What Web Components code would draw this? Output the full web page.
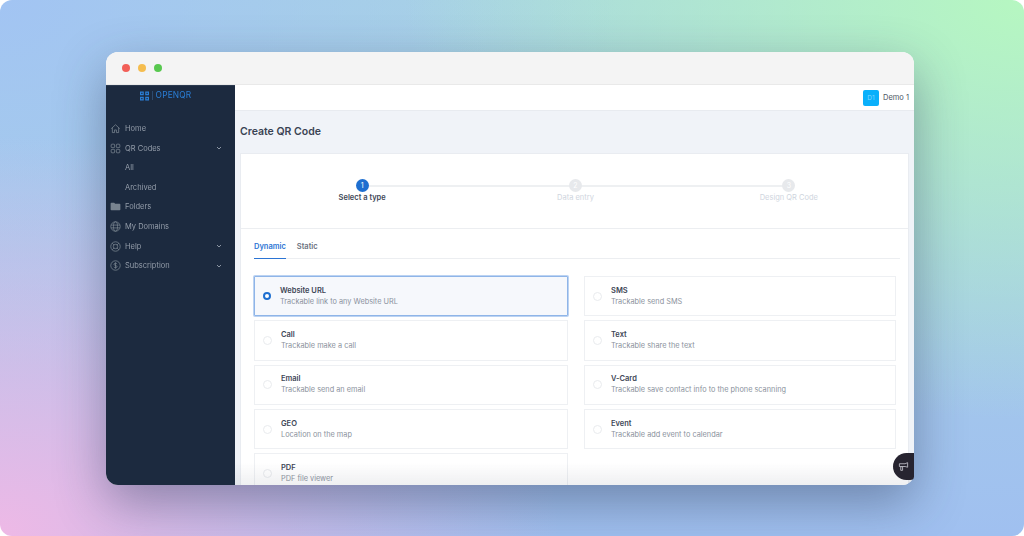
<!DOCTYPE html>
<html>
<head>
<meta charset="utf-8">
<title>OpenQR</title>
<style>
  html, body { margin: 0; height: 100%; }
  body {
    width: 1024px;
    height: 536px;
    overflow: hidden;
    background: #fff;
    font-family: Inter, "Liberation Sans", sans-serif;
  }
</style>
</head>
<body>
<desk-top>
  <app-window>
    <side-nav slot="nav"></side-nav>
    <top-bar slot="top"></top-bar>
    <create-page slot="main"></create-page>
  </app-window>
</desk-top>

<script>
const ICONS = {
  home: '<path d="M1.6 7.2 7 2.2l5.4 5M3 6v6.2h2.8V8.8h2.4v3.4H11V6" fill="none" stroke="currentColor" stroke-width="1"/>',
  grid: '<g fill="none" stroke="currentColor" stroke-width="1"><rect x="1.5" y="1.5" width="4.4" height="4.4" rx="1"/><rect x="8.1" y="1.5" width="4.4" height="4.4" rx="1"/><rect x="1.5" y="8.1" width="4.4" height="4.4" rx="1"/><rect x="8.1" y="8.1" width="4.4" height="4.4" rx="1"/></g>',
  folder: '<path d="M.8 3.2c0-.6.4-1 1-1h3.5l1.3 1.4h5.6c.6 0 1 .4 1 1v6.2c0 .6-.4 1-1 1H1.8c-.6 0-1-.4-1-1z" fill="currentColor"/>',
  globe: '<g fill="none" stroke="currentColor" stroke-width="1"><circle cx="7" cy="7" r="6"/><ellipse cx="7" cy="7" rx="2.6" ry="6"/><path d="M1.4 5.2h11.2M1.4 8.8h11.2"/></g>',
  help: '<g fill="none" stroke="currentColor" stroke-width="1"><circle cx="7" cy="7" r="6"/><circle cx="7" cy="7" r="2.8"/><path d="m2.8 2.8 2.2 2.2M9 9l2.2 2.2m0-8.4L9 5M5 9l-2.2 2.2"/></g>',
  dollar: '<g fill="none" stroke="currentColor" stroke-width="1"><circle cx="7" cy="7" r="6"/><path d="M8.9 5.2C8.6 4.5 7.9 4.1 7 4.1c-1.1 0-1.9.6-1.9 1.4 0 2 3.9 1 3.9 3 0 .8-.9 1.4-2 1.4-1 0-1.8-.4-2-1.2M7 3v8"/></g>'
};

class DeskTop extends HTMLElement {
  constructor() {
    super();
    this.attachShadow({ mode: 'open' });
    this.shadowRoot.innerHTML = `
      <style>
        :host {
          display: block;
          position: relative;
          width: 1024px;
          height: 536px;
          box-sizing: border-box;
          padding: 52px 110px 0 106px;
          border-radius: 12px;
          overflow: hidden;
          background:
            radial-gradient(620px 420px at 100% 0, #b6f7c1 0, rgba(182,247,193,0) 100%),
            radial-gradient(560px 400px at 0 100%, #eeb9e6 0, rgba(238,185,230,0) 100%),
            radial-gradient(620px 420px at 0 0, #a2c4f3 0, rgba(162,196,243,0) 100%),
            linear-gradient(#a9d5e2, #a0c0f0);
        }
      </style>
      <slot></slot>`;
  }
}

class AppWindow extends HTMLElement {
  constructor() {
    super();
    this.attachShadow({ mode: 'open' });
    this.shadowRoot.innerHTML = `
      <style>
        :host {
          display: block;
          position: relative;
          width: 808px;
          height: 433px;
          border-radius: 12px;
          background: #fff;
          box-shadow: 0 18px 50px rgba(40,50,80,.42);
        }
        .frame {
          width: 100%;
          height: 100%;
          border-radius: 12px;
          overflow: hidden;
          display: flex;
          flex-direction: column;
          filter: blur(.45px);
        }
        .chrome {
          flex: 0 0 32px;
          background: #f4f4f4;
          display: flex;
          align-items: center;
          gap: 8px;
          padding-left: 16px;
          border-bottom: 1px solid #e9e9e9;
        }
        .chrome i { width: 8px; height: 8px; border-radius: 50%; }
        .body { flex: 1; display: flex; min-height: 0; }
        .right { flex: 1; display: flex; flex-direction: column; min-width: 0; background: #f0f3f8; }
        .fade {
          position: absolute;
          left: 129px;
          right: 0;
          bottom: 0;
          height: 22px;
          background: linear-gradient(rgba(120,125,140,0), rgba(120,125,140,.12));
          pointer-events: none;
          border-radius: 0 0 12px 0;
        }
        .chat {
          position: absolute;
          right: 0;
          bottom: 5px;
          width: 21px;
          height: 27px;
          background: #272430;
          border-radius: 14px 0 4px 14px;
          color: #b8b7c0;
          display: flex;
          align-items: center;
          justify-content: center;
        }
      </style>
      <div class="frame">
        <div class="chrome">
          <i style="background:#f25f58"></i><i style="background:#f5bd4f"></i><i style="background:#58c84f"></i>
        </div>
        <div class="body">
          <slot name="nav"></slot>
          <div class="right">
            <slot name="top"></slot>
            <slot name="main"></slot>
          </div>
        </div>
      </div>
      <div class="fade"></div>
      <div class="chat">
        <svg width="11" height="11" viewBox="0 0 12 12" fill="none" stroke="currentColor" stroke-width="1">
          <path d="M1.5 3h6.2L10.5 1.8v5L7.7 6H1.5z"/><path d="M3 6.2h2v4H3z"/>
        </svg>
      </div>`;
  }
}

class SideNav extends HTMLElement {
  constructor() {
    super();
    this.attachShadow({ mode: 'open' });
    const items = [
      { icon: 'home', label: 'Home' },
      { icon: 'grid', label: 'QR Codes', caret: true },
      { label: 'All' },
      { label: 'Archived' },
      { icon: 'folder', label: 'Folders' },
      { icon: 'globe', label: 'My Domains' },
      { icon: 'help', label: 'Help', caret: true },
      { icon: 'dollar', label: 'Subscription', caret: true }
    ];
    const rows = items.map(item => `
      <div class="item">
        <span class="ico">${item.icon ? `<svg width="11" height="11" viewBox="0 0 14 14">${ICONS[item.icon]}</svg>` : ''}</span>
        <span class="label">${item.label}</span>
        ${item.caret ? '<svg class="caret" width="6" height="6" viewBox="0 0 6 6"><path d="M1 2l2 2 2-2" fill="none" stroke="#8b95a3" stroke-width="1"/></svg>' : ''}
      </div>`).join('');
    this.shadowRoot.innerHTML = `
      <style>
        :host {
          display: block;
          flex: 0 0 129px;
          background: #1c2a3f;
          color: #949daa;
          font-size: 7.5px;
          border-top: 1px solid #2b3a50;
          box-sizing: border-box;
        }
        .logo {
          height: 19px;
          display: flex;
          align-items: center;
          justify-content: center;
          gap: 3px;
          margin-bottom: 14px;
          padding-right: 10px;
          color: #2a7fd8;
          font-size: 8.3px;
          letter-spacing: .2px;
        }
        .logo b { font-weight: 400; border-left: 1px solid #2d4a6e; padding-left: 3px; line-height: 9px; }
        .item {
          height: 19.55px;
          display: flex;
          align-items: center;
          padding: 0 12px 0 4px;
        }
        .ico { flex: 0 0 11px; height: 11px; margin-right: 4px; color: #78838f; }
        .item .label { flex: 1; }
        .ico svg { display: block; }
        .caret { margin-right: 1px; }
      </style>
      <div class="logo">
        <svg width="9" height="10" viewBox="0 0 10 10" fill="#2a7fd8">
          <path d="M0 0h4.2v4.2H0zM5.8 0H10v4.2H5.8zM0 5.8h4.2V10H0zM5.8 5.8H10V10H5.8z"/>
          <path d="M1.4 1.4h1.4v1.4H1.4zM7.2 1.4h1.4v1.4H7.2zM1.4 7.2h1.4v1.4H1.4zM7.2 7.2h1.4v1.4H7.2z" fill="#1c2a3f"/>
        </svg>
        <b>OPENQR</b>
      </div>
      ${rows}`;
  }
}

class TopBar extends HTMLElement {
  constructor() {
    super();
    this.attachShadow({ mode: 'open' });
    this.shadowRoot.innerHTML = `
      <style>
        :host {
          display: flex;
          flex: 0 0 26px;
          box-sizing: border-box;
          align-items: center;
          justify-content: flex-end;
          gap: 4px;
          padding-right: 5px;
          background: #fff;
          border-bottom: 1px solid #e8ebf0;
          color: #4b5563;
          font-size: 7.5px;
        }
        .avatar {
          width: 16px;
          height: 16px;
          border-radius: 2px;
          background: #0ab0fb;
          color: #7ed6fd;
          font-size: 6.5px;
          display: flex;
          align-items: center;
          justify-content: center;
        }
      </style>
      <span class="avatar">D1</span>
      <span>Demo 1</span>`;
  }
}

class StepBar extends HTMLElement {
  constructor() {
    super();
    this.attachShadow({ mode: 'open' });
    const steps = ['Select a type', 'Data entry', 'Design QR Code'];
    this.shadowRoot.innerHTML = `
      <style>
        :host {
          display: grid;
          grid-template-columns: repeat(3, 1fr);
          width: 640px;
          margin: 0 auto;
          padding: 25px 0 0 0;
          height: 75px;
          box-sizing: border-box;
          position: relative;
          left: 1px;
        }
        .step {
          display: flex;
          flex-direction: column;
          align-items: center;
          gap: 1px;
          font-size: 7.5px;
          color: #cfd5de;
          position: relative;
        }
        .step:first-of-type { color: #3d4656; font-weight: 600; }
        .dot {
          width: 13px;
          height: 13px;
          border-radius: 50%;
          background: #e7e9ec;
          color: #fff;
          font-size: 7px;
          font-weight: 400;
          display: flex;
          align-items: center;
          justify-content: center;
          position: relative;
          z-index: 1;
        }
        .step:first-of-type .dot { background: #1e6fd0; }
        .step:not(:last-child)::after {
          content: '';
          position: absolute;
          top: 5.5px;
          left: 50%;
          width: 100%;
          height: 2px;
          background: #eef0f2;
        }
      </style>
      ${steps.map((s, i) => `<div class="step"><span class="dot">${i + 1}</span><span>${s}</span></div>`).join('')}`;
  }
}

class TypeTabs extends HTMLElement {
  constructor() {
    super();
    this.attachShadow({ mode: 'open' });
    this.shadowRoot.innerHTML = `
      <style>
        :host {
          display: flex;
          gap: 11px;
          height: 30px;
          margin: 0 8px 0 13px;
          border-bottom: 1px solid #eceef1;
          box-sizing: border-box;
          font-size: 7.5px;
          font-weight: 600;
          color: #6b7280;
        }
        span { padding-top: 13px; }
        .on { color: #2b74d4; border-bottom: 1px solid #2b74d4; margin-bottom: -1px; }
      </style>
      <span class="on">Dynamic</span>
      <span>Static</span>`;
  }
}

class TypeOption extends HTMLElement {
  constructor() {
    super();
    this.attachShadow({ mode: 'open' });
    this.shadowRoot.innerHTML = `
      <style>
        :host {
          display: flex;
          align-items: center;
          box-sizing: border-box;
          height: 40.3px;
          padding-left: 8px;
          gap: 9px;
          border: 1px solid #eef0f3;
          background: #fff;
        }
        :host([selected]) {
          background: #f6f8fc;
          border: 1px solid #8fb5e8;
          box-shadow: 0 0 0 1px #bcd3f2;
          border-radius: 1px;
        }
        .radio {
          width: 7px;
          height: 7px;
          border-radius: 50%;
          border: 1px solid #e9ebee;
          flex: none;
        }
        :host([selected]) .radio {
          border: 2.5px solid #1e6fd0;
          width: 4px;
          height: 4px;
          background: #fff;
        }
        .title { font-size: 7.5px; font-weight: 600; color: #3d4656; line-height: 10px; }
        .desc { font-size: 7.35px; color: #8a919c; line-height: 10px; margin-top: 1px; }
      </style>
      <span class="radio"></span>
      <div>
        <div class="title"><slot name="title"></slot></div>
        <div class="desc"><slot name="desc"></slot></div>
      </div>`;
  }
}

class CreatePage extends HTMLElement {
  constructor() {
    super();
    this.attachShadow({ mode: 'open' });
    const left = [
      ['Website URL', 'Trackable link to any Website URL', true],
      ['Call', 'Trackable make a call'],
      ['Email', 'Trackable send an email'],
      ['GEO', 'Location on the map'],
      ['PDF', 'PDF file viewer']
    ];
    const right = [
      ['SMS', 'Trackable send SMS'],
      ['Text', 'Trackable share the text'],
      ['V-Card', 'Trackable save contact info to the phone scanning'],
      ['Event', 'Trackable add event to calendar']
    ];
    const col = list => list.map(([t, d, sel]) =>
      `<type-option ${sel ? 'selected' : ''}><span slot="title">${t}</span><span slot="desc">${d}</span></type-option>`).join('');
    this.shadowRoot.innerHTML = `
      <style>
        :host {
          display: block;
          flex: 1;
          min-height: 0;
          overflow: hidden;
          padding: 0 5px;
        }
        h1 {
          margin: 0;
          height: 42px;
          box-sizing: border-box;
          padding-bottom: 2px;
          display: flex;
          align-items: center;
          font-size: 10.5px;
          font-weight: 600;
          color: #3a4353;
        }
        .card {
          background: #fff;
          border: 1px solid #e9ecf1;
          border-bottom: 0;
          height: 340px;
        }
        .steps { border-bottom: 1px solid #eceef1; height: 74px; overflow: hidden; }
        .grid {
          display: grid;
          grid-template-columns: 314px 312px;
          column-gap: 16px;
          margin: 17px 0 0 13px;
          align-items: start;
        }
        .col { display: flex; flex-direction: column; gap: 4px; }
      </style>
      <h1>Create QR Code</h1>
      <div class="card">
        <div class="steps"><step-bar></step-bar></div>
        <type-tabs></type-tabs>
        <div class="grid">
          <div class="col">${col(left)}</div>
          <div class="col">${col(right)}</div>
        </div>
      </div>`;
  }
}

customElements.define('desk-top', DeskTop);
customElements.define('app-window', AppWindow);
customElements.define('side-nav', SideNav);
customElements.define('top-bar', TopBar);
customElements.define('step-bar', StepBar);
customElements.define('type-tabs', TypeTabs);
customElements.define('type-option', TypeOption);
customElements.define('create-page', CreatePage);
</script>
</body>
</html>
